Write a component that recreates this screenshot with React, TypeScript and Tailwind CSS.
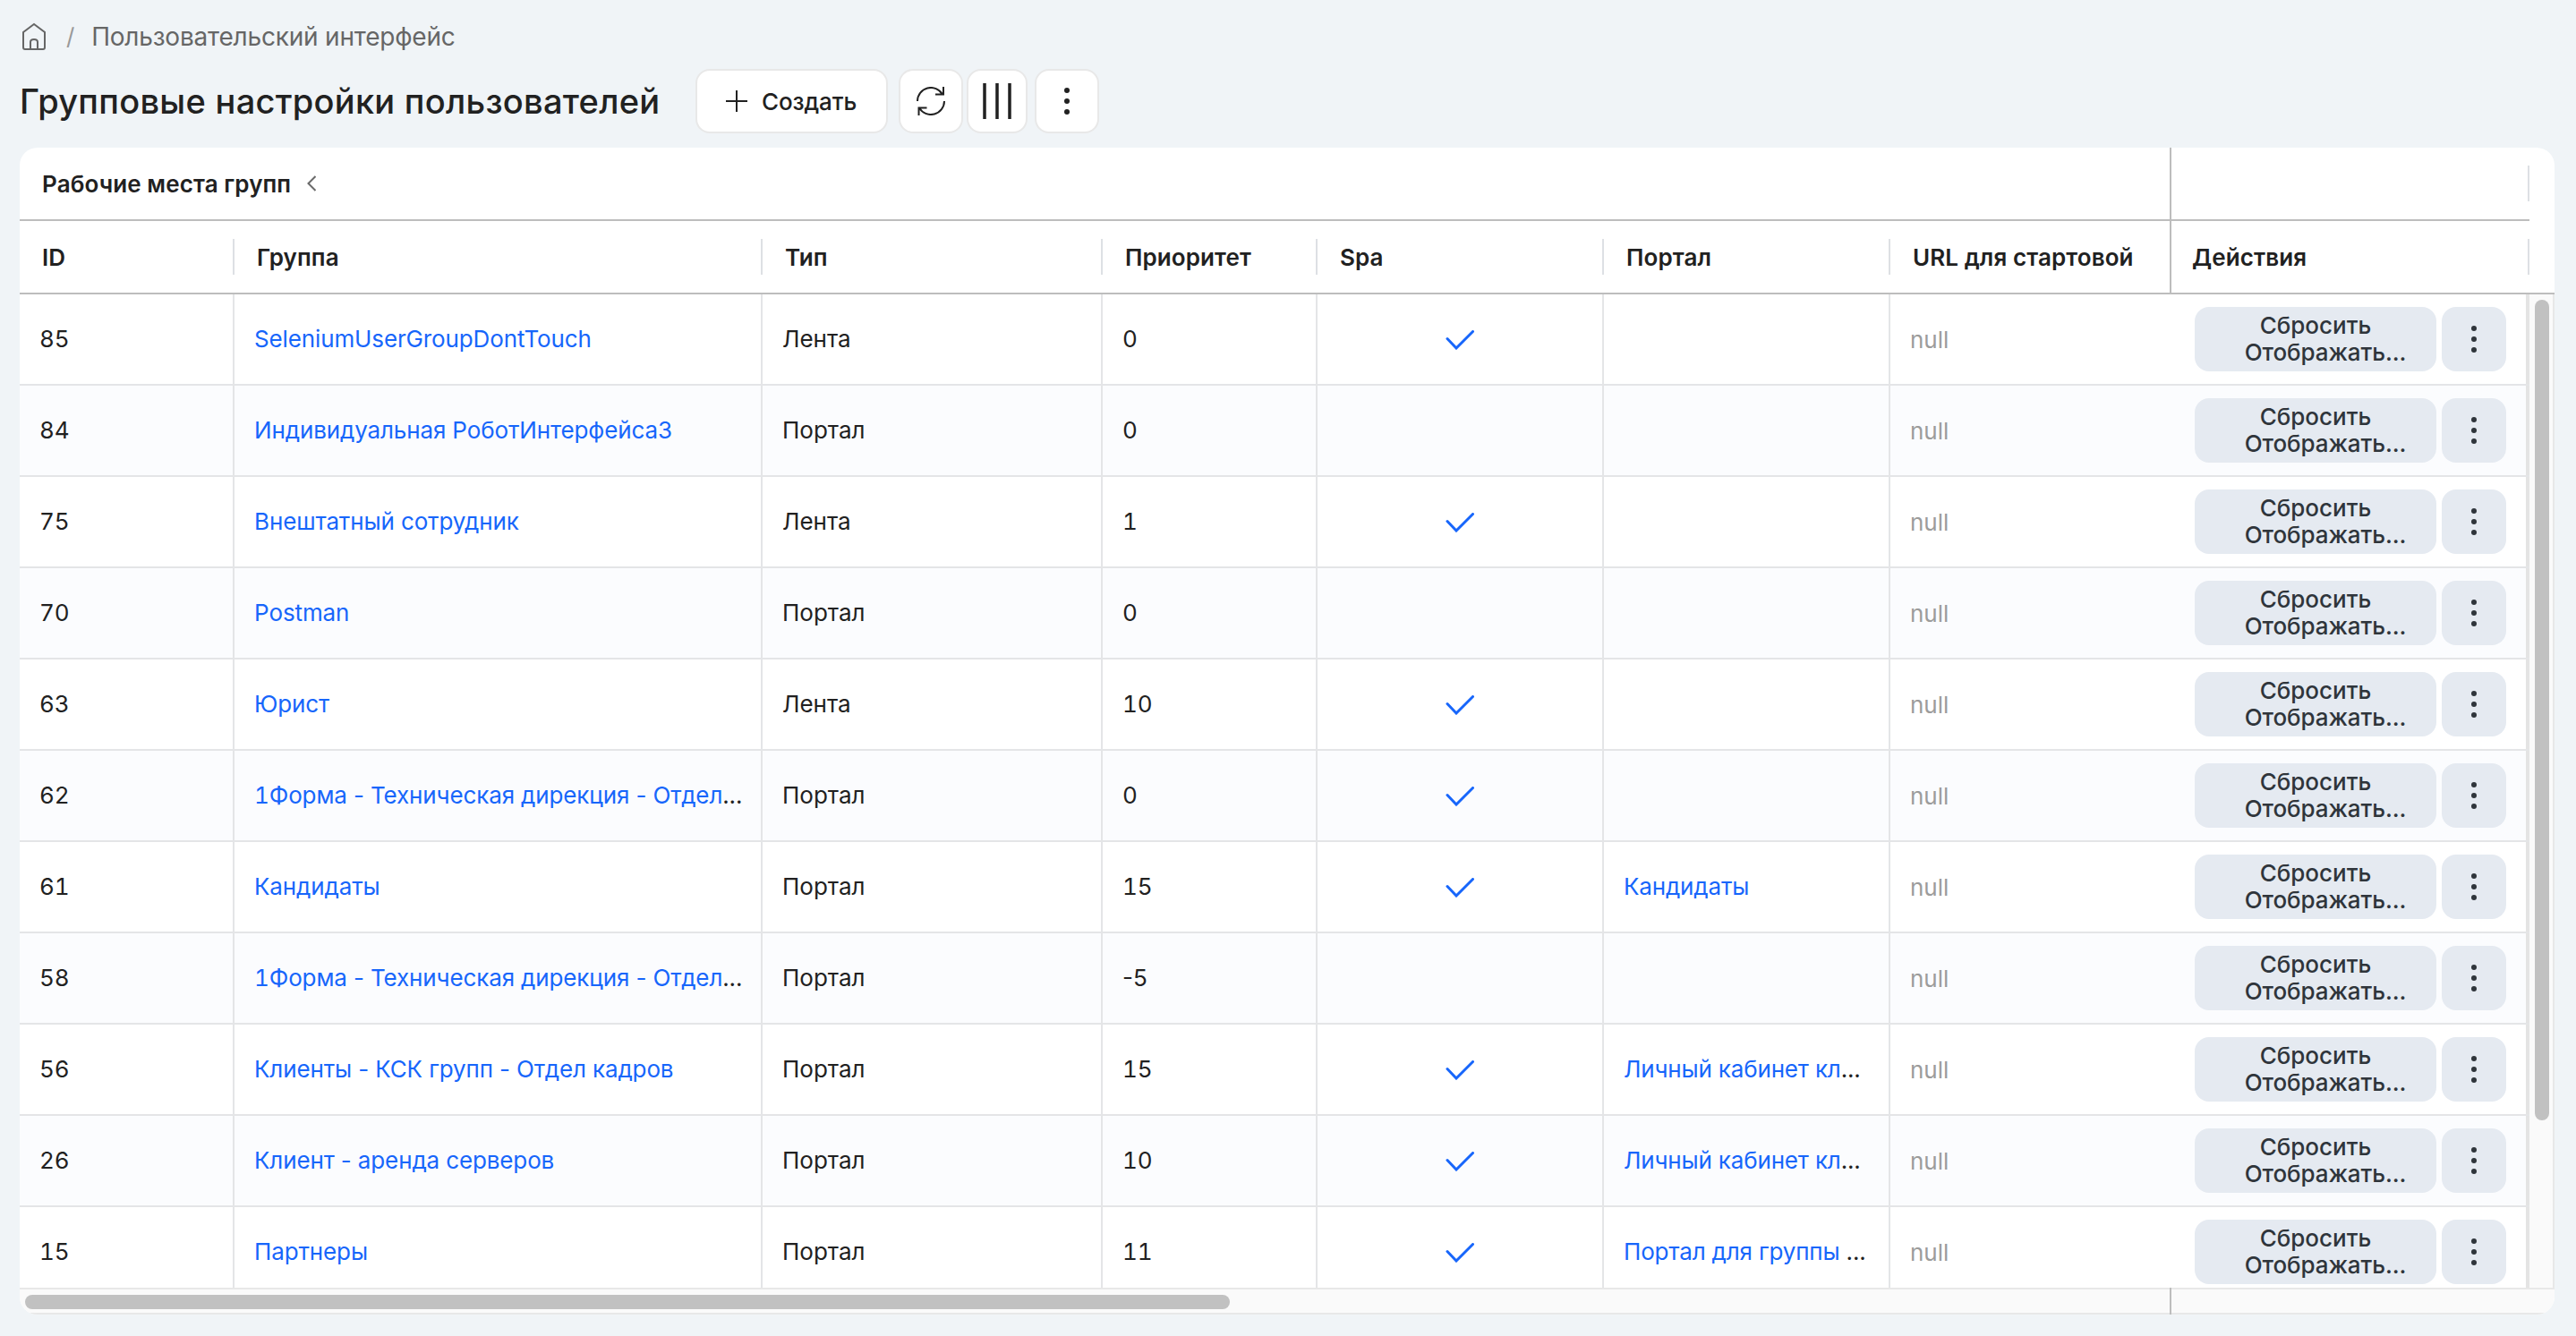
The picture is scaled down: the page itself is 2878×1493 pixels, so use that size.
import React from "react";

type Row = {
  id: string;
  group: string;
  type: string;
  priority: string;
  spa?: boolean;
  portal?: string;
};

const rows: Row[] = [
  { id: "85", group: "SeleniumUserGroupDontTouch", type: "Лента", priority: "0", spa: true },
  { id: "84", group: "Индивидуальная РоботИнтерфейса3", type: "Портал", priority: "0" },
  { id: "75", group: "Внештатный сотрудник", type: "Лента", priority: "1", spa: true },
  { id: "70", group: "Postman", type: "Портал", priority: "0" },
  { id: "63", group: "Юрист", type: "Лента", priority: "10", spa: true },
  { id: "62", group: "1Форма - Техническая дирекция - Отдел...", type: "Портал", priority: "0", spa: true },
  { id: "61", group: "Кандидаты", type: "Портал", priority: "15", spa: true, portal: "Кандидаты" },
  { id: "58", group: "1Форма - Техническая дирекция - Отдел...", type: "Портал", priority: "-5" },
  { id: "56", group: "Клиенты - КСК групп - Отдел кадров", type: "Портал", priority: "15", spa: true, portal: "Личный кабинет кл..." },
  { id: "26", group: "Клиент - аренда серверов", type: "Портал", priority: "10", spa: true, portal: "Личный кабинет кл..." },
  { id: "15", group: "Партнеры", type: "Портал", priority: "11", spa: true, portal: "Портал для группы ..." },
];

const headers = ["ID", "Группа", "Тип", "Приоритет", "Spa", "Портал"];

const columns =
  "grid grid-cols-[240px_590px_380px_240px_320px_320px_314px_400px]";

function Dots() {
  return (
    <svg width="8" height="32" viewBox="0 0 8 32" fill="currentColor">
      <circle cx="4" cy="4" r="3" />
      <circle cx="4" cy="16" r="3" />
      <circle cx="4" cy="28" r="3" />
    </svg>
  );
}

// link text, the trailing ellipsis keeps the cell colour
function CellLink({ text }: { text: string }) {
  const cut = text.endsWith("...");
  return (
    <>
      <span className="text-[#1766fb] first-letter:tabular-nums inline-block">
        {cut ? text.slice(0, -3) : text}
      </span>
      {cut && "..."}
    </>
  );
}

function Toolbar() {
  const button =
    "flex h-[72px] items-center rounded-[16px] border-2 border-[#e8e8e8] bg-white";
  return (
    <div className="ml-[40px] flex items-center">
      <button className={`${button} w-[215px] pl-[32px] text-[26px] font-medium tracking-[-0.1px]`}>
        <svg className="mr-[16px]" width="24" height="24" viewBox="0 0 24 24" fill="none" stroke="currentColor" strokeWidth="2">
          <path d="M12 0v24M0 12h24" />
        </svg>
        Создать
      </button>
      <button className={`${button} ml-[12px] w-[72px] justify-center`}>
        <svg width="32" height="32" viewBox="0 0 32 32" fill="none" stroke="currentColor" strokeWidth="2">
          <path d="M1 16A15 15 0 0 1 29 8.5M30 0v8.5h-9M31 16A15 15 0 0 1 3 23.500M2.500 32v-8.500h9" />
        </svg>
      </button>
      <button className={`${button} ml-[4px] w-[68px] justify-center`}>
        <svg width="34" height="40" viewBox="0 0 34 40" fill="none" stroke="currentColor" strokeWidth="3.500">
          <path d="M3 0v40M17 0v40M31 0v40" />
        </svg>
      </button>
      <button className={`${button} ml-[8px] w-[72px] justify-center`}>
        <Dots />
      </button>
    </div>
  );
}

function TableHead() {
  return (
    <div className="h-[164px] border-b-2 border-[#bdbdbd] font-semibold tracking-[0.1px]">
      <div className="flex h-[82px] w-[2804px] border-b-2 border-[#bdbdbd]">
        <div className="flex w-[2404px] items-center border-r-2 border-[#bdbdbd] pl-[25px]">
          Рабочие места групп
          <svg className="ml-[18px]" width="10" height="18" viewBox="0 0 10 18" fill="none" stroke="#6a6a6a" strokeWidth="2">
            <path d="M9.500 1 1.500 9l8 8" />
          </svg>
        </div>
        <div className="my-auto h-[40px] flex-1 border-r-2 border-[#dde0e4]" />
      </div>
      <div className={`${columns} h-[80px] w-[2804px] items-center`}>
        {headers.map((title) => (
          <div key={title} className="flex h-[40px] items-center border-r-2 border-[#dde0e4] pl-[25px]">
            {title}
          </div>
        ))}
        <div className="flex h-full items-center border-r-2 border-[#bdbdbd] pl-[25px] whitespace-nowrap">
          URL для стартовой
        </div>
        <div className="flex h-[40px] items-center border-r-2 border-[#dde0e4] pl-[23px]">
          Действия
        </div>
      </div>
    </div>
  );
}

function TableRow({ row }: { row: Row }) {
  const cell =
    "flex h-full items-center border-r-2 border-[#e4e5e7] pb-[2px] pl-[22px] overflow-hidden whitespace-pre";
  return (
    <div className={`${columns} h-[102px] shrink-0 border-b-2 border-[#e4e5e7] odd:bg-white even:bg-[#fbfcfe]`}>
      <div className={`${cell} tabular-nums`}>{row.id}</div>
      <div className={`${cell} tracking-[-0.13px]`}>
        <CellLink text={row.group} />
      </div>
      <div className={cell}>{row.type}</div>
      <div className={row.priority.startsWith("-") ? cell : `${cell} tabular-nums`}>
        {row.priority}
      </div>
      <div className="flex items-center justify-center border-r-2 border-[#e4e5e7] pt-[2px]">
        {row.spa && (
          <svg width="32" height="22" viewBox="0 0 32 22" fill="none" stroke="#1766fb" strokeWidth="3" strokeLinecap="round">
            <path d="M2 9.500 12 20 30.500 1.500" />
          </svg>
        )}
      </div>
      <div className={`${cell} tracking-[-0.17px]`}>
        {row.portal && <CellLink text={row.portal} />}
      </div>
      <div className="flex items-center pl-[22px] text-[#9c9c9c]">null</div>
      <div className="flex items-center border-r-4 border-[#e4e4e4] pl-[26px] text-[#2f353b]">
        <button className="flex h-[72px] w-[270px] flex-col items-center justify-center rounded-[16px] bg-[#e5eaf1] text-[26px] leading-[30px] font-medium">
          <span>Сбросить</span>
          <span className="pl-[22px] tracking-[-0.1px]">Отображать...</span>
        </button>
        <button className="ml-[6px] flex h-[72px] w-[72px] items-center justify-center rounded-[16px] bg-[#e5eaf1]">
          <Dots />
        </button>
      </div>
    </div>
  );
}

export default function App() {
  return (
    <main className="h-[1493px] w-[2878px] overflow-hidden bg-[#f0f4f7] px-[22px] font-[Inter,'Noto_Sans',sans-serif] text-[26px] text-[#212121]">
      <nav className="flex h-[77px] items-center pt-[4px] text-[28px] tracking-[-0.2px] text-[#666]">
        <svg className="ml-[2px]" width="28" height="32" viewBox="0 0 28 32" fill="none" stroke="currentColor" strokeWidth="2">
          <path d="M2 11 14 2l12 9v17q0 2-2 2H4q-2 0-2-2ZM10 30V22q0-3 4-3t4 3v8" />
        </svg>
        <span className="ml-[22px] text-[26px] text-[#999]">/</span>
        <span className="ml-[19px]">Пользовательский интерфейс</span>
      </nav>
      <header className="flex h-[88px] items-start">
        <h1 className="w-[715px] text-[38px] leading-[72px] font-medium tracking-[0.28px] whitespace-nowrap">
          Групповые настройки пользователей
        </h1>
        <Toolbar />
      </header>
      <section className="h-[1304px] w-[2832px] overflow-hidden rounded-[20px] bg-white">
        <TableHead />
        <div className="flex h-[1110px]">
          <div className="flex w-[2804px] flex-col overflow-hidden">
            {rows.map((row) => (
              <TableRow key={row.id} row={row} />
            ))}
          </div>
          <div className="flex-1 border-r-2 border-[#e8e8e8] bg-[#fafafa] pt-[6px] pl-[6px]">
            <div className="h-[917px] w-[16px] rounded-full bg-[#c1c1c1]" />
          </div>
        </div>
        <div className="flex h-[30px] bg-[#fafafa]">
          <div className="w-[2402px] border-y-2 border-[#e8e8e8] pt-[6px] pl-[6px]">
            <div className="h-[16px] w-[1346px] rounded-full bg-[#c1c1c1]" />
          </div>
          <div className="w-[2px] bg-[#bdbdbd]" />
          <div className="flex-1 border-y-2 border-[#e8e8e8]" />
        </div>
      </section>
    </main>
  );
}
